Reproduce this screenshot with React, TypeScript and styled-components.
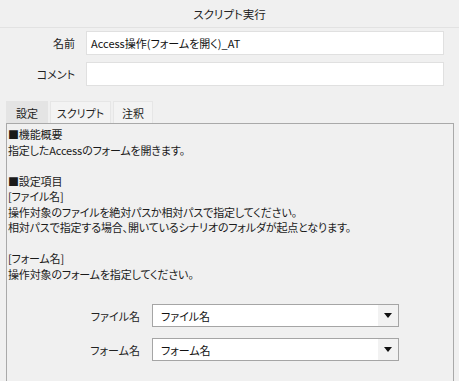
import React from "react";
import styled, { createGlobalStyle } from "styled-components";

const Global = createGlobalStyle`
  html, body { margin: 0; padding: 0; background: #f0f0f0; }
  body {
    font-family: "Noto Sans CJK JP", "Noto Sans", sans-serif;
    color: #1e1e1e;
    font-feature-settings: "palt";
  }
`;

const Page = styled.div`
  width: 459px;
  height: 381px;
  overflow: hidden;
  background: #f0f0f0;
  display: flex;
  flex-direction: column;
`;

const TitleBar = styled.div`
  height: 28px;
  box-sizing: border-box;
  border-bottom: 1px solid #e2e2e2;
  display: flex;
  align-items: center;
  justify-content: center;
  font-size: 11.5px;
  color: #222;
`;

const Form = styled.div`
  display: grid;
  grid-template-columns: 75px 1fr;
  column-gap: 11px;
  row-gap: 7px;
  padding: 3px 15px 0 0;
  align-items: center;
`;

const Label = styled.label`
  text-align: right;
  font-size: 11px;
  color: #222;
`;

const TextInput = styled.div`
  height: 24px;
  box-sizing: border-box;
  background: #fff;
  border: 1px solid #e0e0e0;
  display: flex;
  align-items: center;
  padding-left: 4px;
  font-size: 11px;
  color: #111;
`;

const Tabs = styled.div`
  display: flex;
  gap: 2px;
  margin: 15px 0 0 6px;
  height: 22px;
`;

const Tab = styled.div<{ $active?: boolean; $width: number }>`
  box-sizing: border-box;
  height: 22px;
  width: ${(p) => p.$width}px;
  display: flex;
  align-items: center;
  justify-content: center;
  font-size: 11px;
  color: #222;
  background: ${(p) => (p.$active ? "#e4e4e4" : "#f3f3f3")};
  border: 1px solid ${(p) => (p.$active ? "#e4e4e4" : "#e6e6e6")};
  border-bottom: none;
`;

const Panel = styled.div`
  margin: 0 5px 0 6px;
  flex: 1;
  border: 1px solid #a9a9a9;
  border-bottom: none;
  display: flex;
  flex-direction: column;
`;

const Description = styled.div`
  padding: 3px 0 0 1px;
  font-size: 11px;
  line-height: 15.55px;
  letter-spacing: -0.15px;
  white-space: pre;
  color: #1a1a1a;
`;

const SelectRows = styled.div`
  display: flex;
  flex-direction: column;
  gap: 11px;
  margin-top: 22px;
`;

const SelectRow = styled.div`
  display: grid;
  grid-template-columns: 133px 247px;
  column-gap: 12px;
  align-items: center;
`;

const SelectLabel = styled.span`
  text-align: right;
  font-size: 11px;
  color: #222;
`;

const Select = styled.div`
  height: 23px;
  box-sizing: border-box;
  border: 1px solid #a5a5a5;
  background: #fff;
  display: flex;
  align-items: stretch;
`;

const SelectValue = styled.span`
  flex: 1;
  display: flex;
  align-items: center;
  padding-left: 8px;
  font-size: 11px;
  color: #111;
`;

const SelectButton = styled.span`
  width: 20px;
  background: #f2f2f2;
  display: flex;
  align-items: center;
  justify-content: center;
`;

const Arrow = () => (
  <svg width="8" height="5" viewBox="0 0 8 5">
    <path d="M0 0 H8 L4 5 Z" fill="#111" />
  </svg>
);

const description = `■機能概要
指定したAccessのフォームを開きます。

■設定項目
[ファイル名]
操作対象のファイルを絶対パスか相対パスで指定してください。
相対パスで指定する場合、開いているシナリオのフォルダが起点となります。

[フォーム名]
操作対象のフォームを指定してください。`;

export default function App() {
  return (
    <Page>
      <Global />
      <TitleBar>スクリプト実行</TitleBar>
      <Form>
        <Label>名前</Label>
        <TextInput>Access操作(フォームを開く)_AT</TextInput>
        <Label>コメント</Label>
        <TextInput />
      </Form>
      <Tabs>
        <Tab $active $width={42}>設定</Tab>
        <Tab $width={61}>スクリプト</Tab>
        <Tab $width={40}>注釈</Tab>
      </Tabs>
      <Panel>
        <Description>{description}</Description>
        <SelectRows>
          <SelectRow>
            <SelectLabel>ファイル名</SelectLabel>
            <Select>
              <SelectValue>ファイル名</SelectValue>
              <SelectButton><Arrow /></SelectButton>
            </Select>
          </SelectRow>
          <SelectRow>
            <SelectLabel>フォーム名</SelectLabel>
            <Select>
              <SelectValue>フォーム名</SelectValue>
              <SelectButton><Arrow /></SelectButton>
            </Select>
          </SelectRow>
        </SelectRows>
      </Panel>
    </Page>
  );
}
